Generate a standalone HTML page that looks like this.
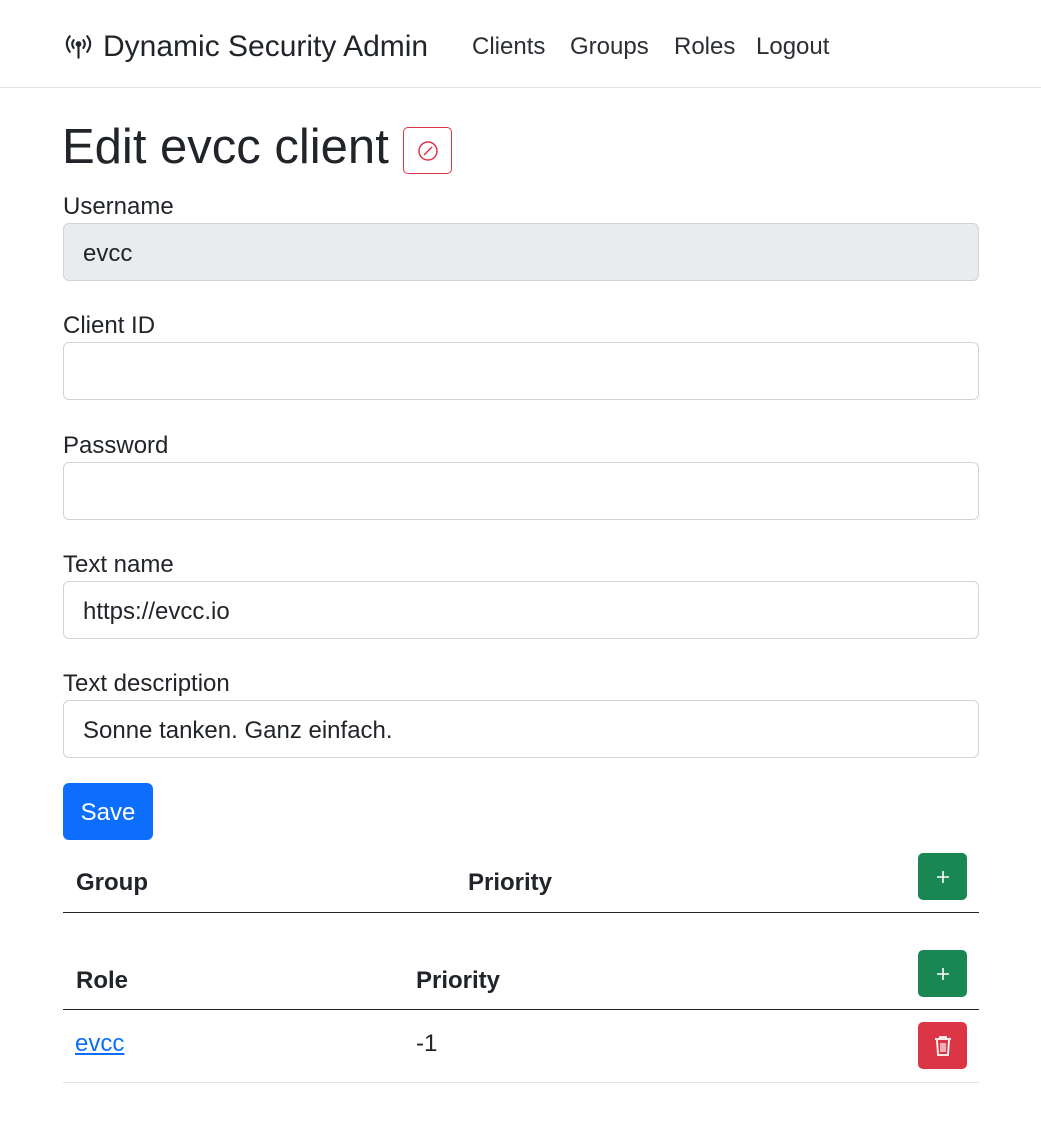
<!DOCTYPE html>
<html><head><meta charset="utf-8"><style>
*{box-sizing:border-box;margin:0;padding:0}
body{width:1041px;height:1131px;background:#fff;font-family:"Liberation Sans",sans-serif;color:#212529;position:relative;overflow:hidden}
.a{position:absolute;white-space:nowrap}
.nav{position:absolute;left:0;top:0;width:1041px;height:88px;border-bottom:1px solid #dee2e6}
.t{font-size:24px;line-height:36px}
.inp{position:absolute;left:63px;width:916px;height:58px;border:1px solid #ced4da;border-radius:6px;background:#fff;font-size:24px;line-height:60px;padding-left:19px}
.b{font-weight:bold;font-size:24px;line-height:36px}
.btn{position:absolute;border-radius:5px;display:flex;align-items:center;justify-content:center}
.g{background:#198754;width:49px;height:47px;left:918px}
.line{position:absolute;left:63px;width:916px;height:1px}
</style></head><body>
<div class="nav">
<svg class="a" style="left:62px;top:33px" width="33" height="26" viewBox="0 0 34 26" fill="none" stroke="#212529" stroke-width="2.2" stroke-linecap="round">
<path d="M8 3 Q2 10 8 19"/><path d="M12 7 Q9 11 12 15"/><path d="M26 3 Q32 10 26 19"/><path d="M22 7 Q25 11 22 15"/>
<circle cx="17" cy="11" r="3" fill="#212529" stroke="none"/><path d="M17 13 V25"/></svg>
<div class="a" style="left:103px;top:27px;font-size:30px;line-height:40px">Dynamic Security Admin</div>
<div class="a t" style="left:472px;top:29px;color:#2b2f33">Clients</div>
<div class="a t" style="left:570px;top:29px;color:#2b2f33">Groups</div>
<div class="a t" style="left:674px;top:29px;color:#2b2f33">Roles</div>
<div class="a t" style="left:756px;top:29px;color:#2b2f33">Logout</div>
</div>
<div class="a" style="left:62px;top:117px;font-size:49px;line-height:60px">Edit evcc client</div>
<div class="btn" style="left:403px;top:127px;width:49px;height:47px;border:1px solid #dc3545">
<svg width="22" height="22" viewBox="0 0 22 22" fill="none" stroke="#dc3545" stroke-width="1.5"><circle cx="11" cy="11" r="9"/><path d="M7 15 L15 7"/></svg></div>

<div class="a t" style="left:63px;top:189px">Username</div>
<div class="inp" style="top:223px;background:#e9ecef;border-color:#ced4da">evcc</div>
<div class="a t" style="left:63px;top:308px">Client ID</div>
<div class="inp" style="top:342px"></div>
<div class="a t" style="left:63px;top:428px">Password</div>
<div class="inp" style="top:462px"></div>
<div class="a t" style="left:63px;top:547px">Text name</div>
<div class="inp" style="top:581px">https://evcc.io</div>
<div class="a t" style="left:63px;top:666px">Text description</div>
<div class="inp" style="top:700px">Sonne tanken. Ganz einfach.</div>

<div class="btn" style="left:63px;top:783px;width:90px;height:57px;background:#0d6efd;color:#fff;font-size:24px;border-radius:6px;padding-top:3px">Save</div>

<div class="a b" style="left:76px;top:865px">Group</div>
<div class="a b" style="left:468px;top:865px">Priority</div>
<div class="btn g" style="top:853px"><svg width="12" height="12" viewBox="0 0 12 12" stroke="#fff" stroke-width="1.6"><path d="M6 0V12M0 6H12"/></svg></div>
<div class="line" style="top:912px;background:#212529"></div>

<div class="a b" style="left:76px;top:963px">Role</div>
<div class="a b" style="left:416px;top:963px">Priority</div>
<div class="btn g" style="top:950px"><svg width="12" height="12" viewBox="0 0 12 12" stroke="#fff" stroke-width="1.6"><path d="M6 0V12M0 6H12"/></svg></div>
<div class="line" style="top:1009px;background:#212529"></div>

<div class="a t" style="left:75px;top:1026px;color:#0d6efd;text-decoration:underline">evcc</div>
<div class="a t" style="left:416px;top:1026px">-1</div>
<div class="btn" style="left:918px;top:1022px;width:49px;height:47px;background:#dc3545">
<svg width="20" height="22" viewBox="0 0 20 22" fill="none" stroke="#fff" stroke-width="1.8"><path d="M2 4H18M7 4V2H13V4"/><path d="M4 5L5 20H15L16 5"/><path d="M8 8V17M10 8V17M12 8V17" stroke-width="1.2"/></svg></div>
<div class="line" style="top:1082px;background:#dee2e6"></div>
</body></html>
